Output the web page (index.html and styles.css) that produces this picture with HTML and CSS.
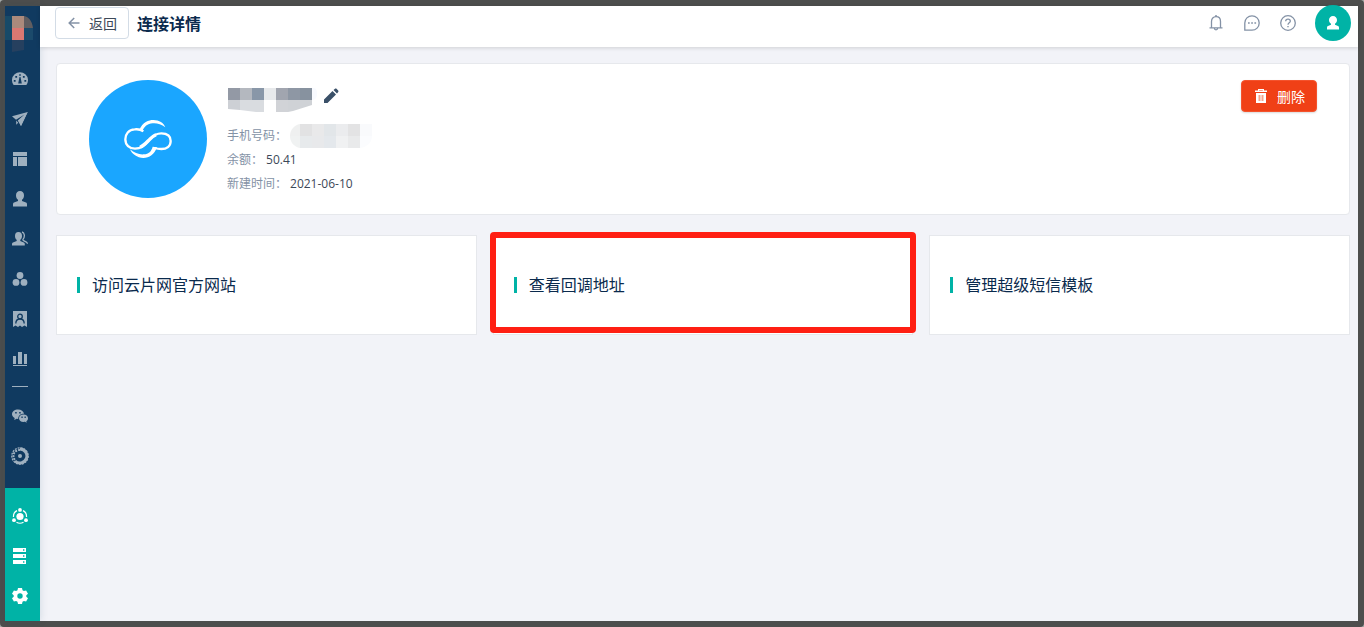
FILE: index.html
```html
<!DOCTYPE html>
<html lang="zh-CN">
<head>
    <meta charset="UTF-8">
    <meta name="viewport" content="width=device-width, initial-scale=1.0">
    <title>连接详情</title>
    <link rel="stylesheet" href="styles.css">
</head>
<body>
    <div class="shell">
        <aside class="sidebar">
            <div class="brand">
                <svg width="28" height="36" viewBox="0 0 28 36">
                    <path fill="#174a68" d="M0 0h7v24H0z"/>
                    <path fill="#ab8a7c" d="M7 0h12v12H7z"/>
                    <path fill="#605d60" d="M19 0c5 1 8 5 9 12h-9z"/>
                    <path fill="#db7872" d="M7 12h12v12H7z"/>
                    <path fill="#1b4a6b" d="M19 12h9v12h-9z"/>
                    <path fill="#26405f" d="M7 24h12v10l-12 2z"/>
                </svg>
            </div>
            <nav class="nav">
                <a href="#" class="nav-item">
                    <svg width="16" height="16" viewBox="0 0 16 16"><path fill="currentColor" fill-rule="evenodd" d="M1.600 14A8 8 0 1 1 14.400 14H1.600zM7.400 3h1.200v2H7.400zM3.300 5h1.800v1.800H3.300zM10.900 5h1.800v1.800h-1.800zM1.800 9h1.800v1.800H1.800zM12.400 9h1.800v1.800h-1.800zM7.500 6L6.200 12.400h3.600L8.500 6z"/></svg>
                </a>
                <a href="#" class="nav-item">
                    <svg width="16" height="16" viewBox="0 0 16 16"><path fill="currentColor" d="M15.700 1L0 5.200l4 3.600L12.500 3.500 5.800 9.600l3.200 5.400zM4.200 9.500v4.300l2-2z"/><path fill="currentColor" d="M15.700 1L6.500 9.800 9 15z"/></svg>
                </a>
                <a href="#" class="nav-item">
                    <svg width="16" height="16" viewBox="0 0 16 16"><path fill="currentColor" d="M1 1h14v4H1zM1 6h4v9H1zM6 6h9v9H6z"/></svg>
                </a>
                <a href="#" class="nav-item">
                    <svg width="16" height="16" viewBox="0 0 16 16"><path fill="currentColor" d="M8 0c2.500 0 4 1.800 4 4.200 0 2-.7 3.600-2 4.600v1.300l4 1.500c.8.400 1 1 1 2V15.500H1V13.600c0-1 .3-1.600 1-2l4-1.500V8.800C4.700 7.800 4 6.200 4 4.200 4 1.800 5.500 0 8 0z"/></svg>
                </a>
                <a href="#" class="nav-item">
                    <svg width="16" height="16" viewBox="0 0 16 16"><path fill="currentColor" d="M6.500 1C8.900 1 10 2.700 10 4.900c0 1.700-.6 3-1.700 3.900v1.200l3.500 1.600c.7.300 1 .8 1 1.600v1.300H0v-1.300c0-.8.300-1.300 1-1.600l3.700-1.600V8.800C3.600 7.900 3 6.600 3 4.900 3 2.700 4.100 1 6.500 1z"/><path fill="none" stroke="currentColor" stroke-width="1.300" d="M10 1c2.600.6 3.200 4.600 1 7.300-.3.700 0 1 .6 1.300l2.400 1.200c1 .5 1.400 1 1.400 2"/></svg>
                </a>
                <a href="#" class="nav-item">
                    <svg width="16" height="16" viewBox="0 0 16 16"><g fill="currentColor"><circle cx="8" cy="4.500" r="3.400"/><circle cx="4" cy="11.400" r="3.400"/><circle cx="12" cy="11.400" r="3.400"/></g></svg>
                </a>
                <a href="#" class="nav-item">
                    <svg width="16" height="16" viewBox="0 0 16 16"><path fill="currentColor" d="M1 0h14v16l-2.500-1.500L10 16l-2-1.500L6 16l-2.500-1.500L1 16z"/><g fill="none" stroke="#103a60" stroke-width="1.300"><circle cx="8" cy="5.500" r="2.300"/><path d="M3.800 12.500c0-6 8.400-6 8.400 0"/></g></svg>
                </a>
                <a href="#" class="nav-item">
                    <svg width="16" height="16" viewBox="0 0 16 16"><path fill="currentColor" d="M1 5h3v8H1zM6 1h4v12H6zM12 3h3v10h-3zM1 14h14v1H1z"/></svg>
                </a>
                <div class="nav-divider"></div>
                <a href="#" class="nav-item">
                    <svg width="16" height="16" viewBox="0 0 16 16"><path fill="currentColor" fill-rule="evenodd" d="M6 1.500c3.200 0 5.600 1.800 6 4.200C8.700 5.500 6 7.700 6.200 11L4.500 10.700 2.200 12l.5-2C1 9 0 7.700 0 6.200 0 3.500 2.700 1.500 6 1.500zM3.200 4v1.500h1.500V4zM7.200 4v1.500h1.500V4z"/><path fill="currentColor" fill-rule="evenodd" d="M11.500 6.500c2.600 0 4.500 1.600 4.500 3.700 0 1.300-.6 2.200-1.700 3l.4 1.500-1.700-.9c-3.300.7-6-1-6-3.600 0-2.100 1.900-3.700 4.500-3.700zM9.400 8.600v1.300h1.300V8.600zM12.500 8.600v1.300h1.300V8.600z"/></svg>
                </a>
                <a href="#" class="nav-item">
                    <svg width="18" height="18" viewBox="0 0 18 18"><g fill="none" stroke="currentColor"><circle cx="9" cy="9" r="8.200" stroke-width="1.300" stroke-dasharray="2 1"/><path stroke-width="3" d="M9 2a7 7 0 1 1-5 12"/><path stroke-width="2" stroke-dasharray="2 1" d="M9 3a6 6 0 0 0-5 10"/></g><circle cx="9" cy="9" r="2" fill="currentColor"/></svg>
                </a>
            </nav>
            <nav class="nav nav-admin">
                <a href="#" class="nav-item">
                    <svg width="16" height="16" viewBox="0 0 16 16"><g fill="currentColor"><circle cx="8" cy="8.500" r="3.600"/><circle cx="8" cy="1.900" r="1.900"/><circle cx="2" cy="12.200" r="1.900"/><circle cx="14" cy="12.200" r="1.900"/></g><path fill="none" stroke="currentColor" stroke-width="1.200" d="M5 2.600C2.500 3.800 1.300 6.200 1.500 9M11 2.600c2.500 1.200 3.700 3.600 3.500 6.400M4.500 14.200c2.200 1.300 4.800 1.300 7 0"/></svg>
                </a>
                <a href="#" class="nav-item">
                    <svg width="16" height="16" viewBox="0 0 16 16"><path fill="currentColor" fill-rule="evenodd" d="M1 0h13v4H1zM11 1.300v1.400h1.400V1.300zM1 6h13v4H1zM11 7.300v1.400h1.400V7.300zM1 12h13v4H1zM11 13.300v1.400h1.400v-1.400z"/></svg>
                </a>
                <a href="#" class="nav-item">
                    <svg width="16" height="16" viewBox="0 0 16 16"><path fill="currentColor" fill-rule="evenodd" d="M6 0h4l.5 2.300 1.400.8 2.200-.7 1.900 3.300L14.300 7.200v1.600l1.700 1.500-1.900 3.300-2.200-.7-1.400.8L10 16H6l-.5-2.300-1.400-.8-2.200.7L0 10.300l1.700-1.500V7.200L0 5.700l1.900-3.300 2.200.7 1.400-.8zM8 5.300a2.700 2.700 0 1 0 0 5.400 2.700 2.700 0 0 0 0-5.400z"/></svg>
                </a>
            </nav>
        </aside>

        <div class="page">
            <header class="header">
                <button type="button" class="button back">
                    <svg width="12" height="12" viewBox="0 0 12 12"><path fill="none" stroke="#8492a6" stroke-width="1.500" d="M11.500 6H1.500M6.200 1L1.200 6l5 5"/></svg>
                    返回
                </button>
                <h1 class="title">连接详情</h1>
                <div class="tools">
                    <button type="button" class="tool" aria-label="通知">
                        <svg width="16" height="16" viewBox="0 0 16 16"><g fill="none" stroke="currentColor" stroke-width="1.300"><path d="M3.500 12.500V6.500C3.500 3.700 5.300 1.700 8 1.700s4.500 2 4.500 4.800v6M1.500 12.900h13M6.300 13.300c.2 2 3.200 2 3.400 0"/><path d="M7 1h2"/></g></svg>
                    </button>
                    <button type="button" class="tool" aria-label="消息">
                        <svg width="16" height="16" viewBox="0 0 16 16"><path fill="none" stroke="currentColor" stroke-width="1.300" d="M.8 15.200V8A7.200 7.200 0 1 1 8 15.200z"/><path fill="currentColor" d="M4 7.200h1.700v1.600H4zM7.200 7.200h1.700v1.600H7.200zM10.400 7.200h1.700v1.600h-1.700z"/></svg>
                    </button>
                    <button type="button" class="tool" aria-label="帮助">
                        <svg width="16" height="16" viewBox="0 0 16 16"><g fill="none" stroke="currentColor" stroke-width="1.300"><circle cx="8" cy="8" r="7.300"/><path d="M5.700 6.200C5.800 3.500 10.300 3.600 10.300 6.200c0 1.600-2.300 1.700-2.300 3.500"/></g><path fill="currentColor" d="M7.300 11h1.400v1.300H7.300z"/></svg>
                    </button>
                </div>
                <button type="button" class="avatar" aria-label="账户">
                    <svg width="12" height="14" viewBox="0 0 12 14"><path fill="#fff" d="M6 0c2.300 0 4 1.700 4 4 0 1.700-.8 3-2 3.700v1l3 1.200c.8.400 1 1 1 2V13.500H0V11.900c0-1 .2-1.600 1-2l3-1.200v-1C2.800 7 2 5.700 2 4c0-2.300 1.700-4 4-4z"/></svg>
                </button>
            </header>

            <main class="content">
                <section class="profile">
                    <div class="profile-logo">
                        <svg width="48" height="38" viewBox="0 0 144 114">
                            <path fill="none" stroke="#fff" stroke-width="7" d="M58 34C50 28 40 27 32 28 14 29 4 42 4 58c0 17 12 28 29 28 23 0 33-17 45-29 10-11 20-17 34-17 18 0 28 9 28 23 0 16-12 24-28 24-8 0-14-1-20-3"/>
                            <path fill="none" stroke="#fff" stroke-width="10" d="M48 82c12-5 20-15 29-24 6-7 12-11 19-14"/>
                            <path fill="#fff" d="M46 30C56 6 74 0 88 0c18 0 31 9 36 22C112 12 98 9 86 10 70 11 61 20 55 34zM99 82c-8 22-23 32-41 32-19-1-34-11-40-26 13 11 27 16 41 15 16-1 23-9 27-23z"/>
                        </svg>
                    </div>
                    <div class="profile-info">
                        <div class="profile-name">
                            <svg width="96" height="24" viewBox="0 0 96 24">
                                <path fill="#f8faff" d="M85 0h2c4 0 5 12-2 12z"/>
                                <path fill="#9399a5" d="M1 0h12v12H1z"/>
                                <path fill="#b4b8bf" d="M13 0h12v12H13z"/>
                                <path fill="#8997a8" d="M25 0h12v12H25z"/>
                                <path fill="#e7e9eb" d="M37 0h12v12H37z"/>
                                <path fill="#a1a5af" d="M49 0h12v12H49z"/>
                                <path fill="#8e97a4" d="M61 0h12v12H61z"/>
                                <path fill="#87929f" d="M73 0h12v12H73z"/>
                                <path fill="#cdd0d5" d="M1 12h12v10L1 21z"/>
                                <path fill="#d9dce0" d="M13 12h24v12h-8l-16-2z"/>
                                <path fill="#d1d3d7" d="M49 12h12v12H49z"/>
                                <path fill="#cfd2d6" d="M61 12h24v5L66 23l-5 1z"/>
                            </svg>
                            <button type="button" class="tool edit" aria-label="编辑">
                                <svg width="16" height="16" viewBox="0 0 16 16"><path fill="currentColor" d="M1 15v-3.500L9.500 3 13 6.500 4.500 15zM10.500 2L12 .8c.4-.4 1-.4 1.500 0l1.700 1.700c.4.400.4 1 0 1.500L14 5.500z"/></svg>
                            </button>
                        </div>
                        <dl class="fields">
                            <div class="field">
                                <dt>手机号码：</dt>
                                <dd>
                                    <svg width="82" height="24" viewBox="0 0 82 24">
                                        <path fill="#eff0f0" d="M10 0C4 1 0 6 0 12h10z"/>
                                        <path fill="#e2e2e3" d="M10 0h12v12H10z"/>
                                        <path fill="#e9e9ea" d="M22 0h12v12H22z"/>
                                        <path fill="#e2e6e9" d="M34 0h12v12H34z"/>
                                        <path fill="#ebecee" d="M46 0h12v12H46z"/>
                                        <path fill="#e3e3e4" d="M58 0h12v12H58z"/>
                                        <path fill="#f9fafc" d="M70 0h12v12H70z"/>
                                        <path fill="#f0f2f2" d="M0 12c0 6 4 11 10 12V12z"/>
                                        <path fill="#e7eaec" d="M10 12h12v12H10z"/>
                                        <path fill="#e8e9eb" d="M22 12h12v12H22z"/>
                                        <path fill="#e4e8ec" d="M34 12h12v12H34z"/>
                                        <path fill="#f0f1f2" d="M46 12h12v12H46z"/>
                                        <path fill="#e9eaeb" d="M58 12h12v12H58z"/>
                                        <path fill="#fbfcfe" d="M70 12h12c0 6-4 11-12 12z"/>
                                    </svg>
                                </dd>
                            </div>
                            <div class="field">
                                <dt>余额：</dt>
                                <dd>50.41</dd>
                            </div>
                            <div class="field">
                                <dt>新建时间：</dt>
                                <dd>2021-06-10</dd>
                            </div>
                        </dl>
                    </div>
                    <button type="button" class="button delete">
                        <svg width="12" height="14" viewBox="0 0 12 14"><path fill="#fff" fill-rule="evenodd" d="M3 0h6v1.500h3V3H0V1.500h3zM4.200 1v.6h3.600V1zM1 4h10v10H1z"/><path fill="#f5a58c" d="M3.500 6h5v6h-5z"/><path stroke="#fff" stroke-width="1" d="M6 6v6"/></svg>
                        删除
                    </button>
                </section>

                <div class="cards">
                    <a href="#" class="card"><span class="card-title">访问云片网官方网站</span></a>
                    <a href="#" class="card marked"><span class="card-title">查看回调地址</span></a>
                    <a href="#" class="card"><span class="card-title">管理超级短信模板</span></a>
                </div>
            </main>
        </div>
    </div>
</body>
</html>
```
FILE: styles.css
```css
* {
    box-sizing: border-box;
}
body {
    margin: 0;
    background-color: #a5a8a6;
    font-family: "Open Sans", "Noto Sans CJK SC", sans-serif;
    font-size: 14px;
    color: #0a2a4d;
}
button {
    font-family: inherit;
    cursor: pointer;
}
svg {
    display: block;
    flex: none;
}
.shell {
    display: flex;
    min-height: 100vh;
    border: 6px solid #4d4e4d;
    border-left-width: 5px;
    border-radius: 4px;
    background-color: #f2f3f8;
}

/* sidebar */
.sidebar {
    display: flex;
    flex-direction: column;
    flex: none;
    width: 35px;
    background-color: #103a60;
    box-shadow: 0 0 8px rgba(16,58,96,0.15);
}
.brand {
    height: 53px;
    padding-top: 10px;
}
.nav {
    padding-right: 5px;
}
.nav-item {
    display: flex;
    align-items: center;
    justify-content: center;
    height: 40px;
    color: #9fb0bf;
}
.nav-divider {
    width: 16px;
    height: 1px;
    margin: 7px auto 9px;
    background-color: #9fb0bf;
}
.nav-admin {
    margin-top: auto;
    padding-top: 8px;
    padding-bottom: 5px;
    background-color: #00b3a6;
}
.nav-admin .nav-item {
    color: #fff;
}

/* header */
.page {
    flex: 1;
    min-width: 0;
}
.header {
    display: flex;
    align-items: center;
    height: 41px;
    padding: 0 7px 7px 15px;
    background-color: #fff;
    box-shadow: 0 1px 4px rgba(0,0,0,0.15);
}
.button {
    display: flex;
    align-items: center;
    height: 32px;
    border-radius: 4px;
    font-size: 14px;
}
.back {
    gap: 9px;
    padding: 0 11px 0 12px;
    border: 1px solid #d3dce6;
    background-color: #fff;
    color: #3c4858;
}
.title {
    margin: 0 0 0 8px;
    font-size: 16px;
    font-weight: 600;
}
.tools {
    display: flex;
    align-items: center;
    gap: 20px;
    margin: 0 19px 0 auto;
}
.tool {
    padding: 0;
    border: none;
    background: none;
    color: #8492a6;
}
.avatar {
    display: flex;
    align-items: center;
    justify-content: center;
    width: 36px;
    height: 36px;
    padding: 0;
    border: none;
    border-radius: 50%;
    background-color: #00b3a6;
}

/* content */
.content {
    padding: 16px 8px 16px 16px;
}
.profile {
    display: flex;
    align-items: flex-start;
    padding: 16px 32px;
    border: 1px solid #e6e8ec;
    border-radius: 4px;
    background-color: #fff;
}
.profile-logo {
    display: flex;
    align-items: center;
    justify-content: center;
    width: 118px;
    height: 118px;
    border-radius: 50%;
    background-color: #1aa6ff;
}
.profile-info {
    margin-left: 20px;
}
.profile-name {
    display: flex;
    align-items: flex-start;
    height: 44px;
    padding-top: 8px;
}
.edit {
    color: #3a5068;
}
.fields {
    margin: 0;
    font-size: 12px;
    line-height: 24px;
}
.field {
    display: flex;
    gap: 3px;
    height: 24px;
}
.field dt {
    color: #8492a6;
}
.field dd {
    margin: 0;
    color: #3c4858;
}
.delete {
    gap: 10px;
    margin-left: auto;
    padding: 0 11px 0 13px;
    border: 1px solid #f4532d;
    background-color: #f04016;
    color: #fff;
    box-shadow: 0 1px 2px rgba(0,0,0,0.15);
}
.cards {
    display: grid;
    grid-template-columns: repeat(3, 1fr);
    gap: 16px;
    margin-top: 20px;
}
.card {
    position: relative;
    display: flex;
    align-items: center;
    height: 100px;
    padding: 0 20px;
    border: 1px solid #e6e8ec;
    background-color: #fff;
    color: #0a2a4d;
    text-decoration: none;
}
.card-title {
    padding-left: 12px;
    border-left: 3px solid #00b3a6;
    font-size: 16px;
    line-height: 16px;
}
.marked::after {
    content: "";
    position: absolute;
    top: -4px;
    right: -4px;
    bottom: 1px;
    left: -4px;
    border: 6px solid #ff1f13;
    border-radius: 4px;
}
```
